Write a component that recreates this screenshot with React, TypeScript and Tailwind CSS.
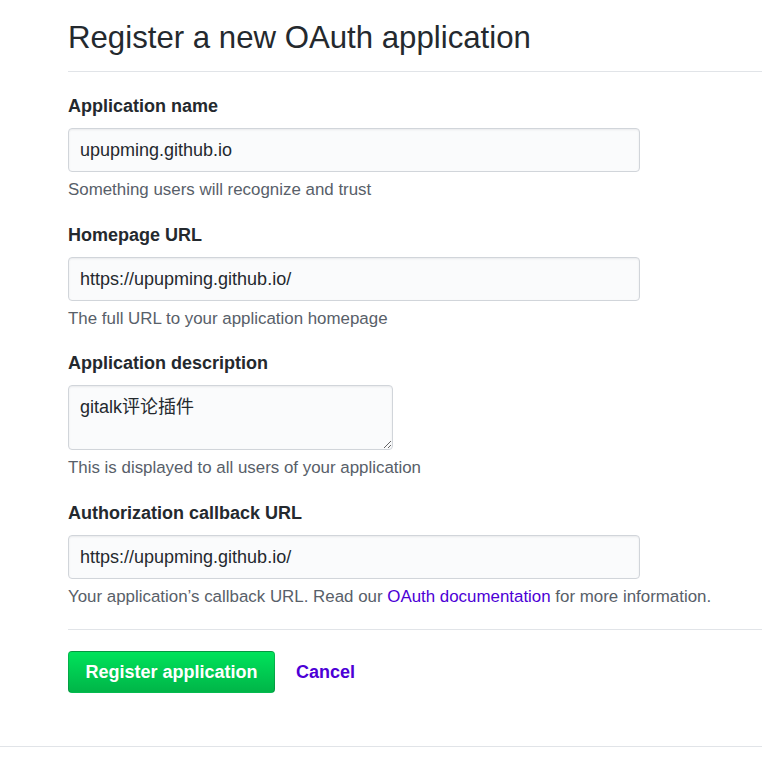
// Register a new OAuth application — GitHub developer settings form.
const font = { fontFamily: '"Liberation Sans", Arial, "Noto Sans CJK SC", sans-serif' };

type FieldProps = {
    label: string;
    note: React.ReactNode;
    className?: string;
    children: React.ReactNode;
};

const Field: React.FC<FieldProps> = ({ label, note, className = 'mb-[21px]', children }) => (
    <div className={className}>
        <label className="mb-[10px] block text-[18px] font-bold leading-[24px] text-[#24292e]">
            {label}
        </label>
        {children}
        <p className="mt-[6px] text-[16.9px] leading-[24px] text-[#586069]">{note}</p>
    </div>
);

const inputClass =
    'block h-[44px] w-[572px] rounded-[4px] border border-[#d1d5da] bg-[#fafbfc] px-[11px] text-[18px] text-[#24292e] shadow-[inset_0_1px_2px_rgba(27,31,35,0.075)] outline-none';

export default function App() {
    return (
        <div className="min-h-[760px] bg-white" style={font}>
            <div className="pl-[68px] pt-[18px]">
                <h1 className="border-b border-[#e1e4e8] pb-[13px] text-[31.2px] font-normal leading-[40px] text-[#24292e]">
                    Register a new OAuth application
                </h1>

                <form className="pt-[22px]">
                    <Field label="Application name" note="Something users will recognize and trust">
                        <input className={inputClass} defaultValue="upupming.github.io" />
                    </Field>

                    <Field
                        label="Homepage URL"
                        note="The full URL to your application homepage"
                        className="mb-[20px]"
                    >
                        <input className={inputClass} defaultValue="https://upupming.github.io/" />
                    </Field>

                    <Field
                        label="Application description"
                        note="This is displayed to all users of your application"
                    >
                        <textarea
                            className="block h-[65px] w-[325px] rounded-[4px] border border-[#d1d5da] bg-[#fafbfc] px-[11px] py-[9px] text-[18px] leading-[24px] text-[#24292e] shadow-[inset_0_1px_2px_rgba(27,31,35,0.075)] outline-none"
                            defaultValue="gitalk评论插件"
                        />
                    </Field>

                    <Field
                        label="Authorization callback URL"
                        note={
                            <>
                                Your application’s callback URL. Read our{' '}
                                <a href="#" className="text-[#4c00d6]">
                                    OAuth documentation
                                </a>{' '}
                                for more information.
                            </>
                        }
                    >
                        <input className={inputClass} defaultValue="https://upupming.github.io/" />
                    </Field>

                    <div className="-mt-[1px] border-t border-[#e1e4e8] pt-[21px]">
                        <div className="flex items-center gap-[21px]">
                            <button
                                type="button"
                                className="h-[42px] w-[207px] rounded-[4px] border border-[rgba(27,31,35,0.2)] bg-gradient-to-b from-[#00e35b] to-[#00b548] text-[18px] font-bold text-white"
                            >
                                Register application
                            </button>
                            <a href="#" className="text-[18px] font-bold text-[#4c00d6]">
                                Cancel
                            </a>
                        </div>
                    </div>
                </form>
            </div>

            <div className="mt-[53px] border-t border-[#e1e4e8]" />
        </div>
    );
}
